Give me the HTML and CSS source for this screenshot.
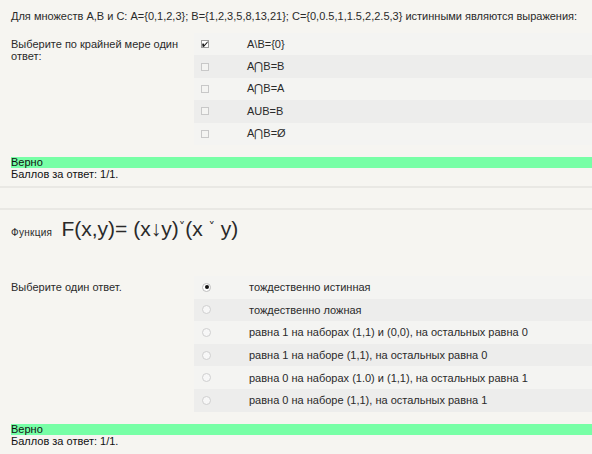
FILE: index.html
```html
<!DOCTYPE html>
<html lang="ru">
<head>
<meta charset="utf-8">
<link rel="stylesheet" href="styles.css">
</head>
<body>
<div class="question q1">
  <div class="qtext">Для множеств А,В и С: А={0,1,2,3}; B={1,2,3,5,8,13,21}; C={0,0.5,1,1.5,2,2.5,3} истинными являются выражения:</div>
  <div class="ablock">
    <div class="prompt">Выберите по крайней мере один ответ:</div>
    <div class="answers">
      <div class="row r0"><span class="cb checked"><svg width="6" height="6" viewBox="0 0 6 6"><path d="M0.5 2.6 L2 4.2 L5.6 0.3 L5.6 1.8 L2 5.8 L0.5 4.2 Z" fill="#1a1a1a"/><rect x="0.5" y="2.6" width="1.6" height="3.2" fill="#1a1a1a"/></svg></span><span class="lbl">A\B={0}</span></div>
      <div class="row r1"><span class="cb"></span><span class="lbl">A⋂B=B</span></div>
      <div class="row r0"><span class="cb"></span><span class="lbl">A⋂B=A</span></div>
      <div class="row r1"><span class="cb"></span><span class="lbl">AUB=B</span></div>
      <div class="row r0"><span class="cb"></span><span class="lbl">A⋂B=Ø</span></div>
    </div>
  </div>
  <div class="feedback">Верно</div>
  <div class="grade">Баллов за ответ: 1/1.</div>
</div>
<div class="sep"></div>
<div class="sep sep2"></div>
<div class="question q2">
  <div class="qtext2"><span class="small">Функция</span> <span class="formula">F(x,y)= (x↓y)<span class="vee">˅</span>(x <span class="vee">˅</span> y)</span></div>
  <div class="ablock ablock2">
    <div class="prompt">Выберите один ответ.</div>
    <div class="answers">
      <div class="row r0"><span class="rd checked"></span><span class="lbl">тождественно истинная</span></div>
      <div class="row r1"><span class="rd"></span><span class="lbl">тождественно ложная</span></div>
      <div class="row r0"><span class="rd"></span><span class="lbl">равна 1 на наборах (1,1) и (0,0), на остальных равна 0</span></div>
      <div class="row r1"><span class="rd"></span><span class="lbl">равна 1 на наборе (1,1), на остальных равна 0</span></div>
      <div class="row r0"><span class="rd"></span><span class="lbl">равна 0 на наборах (1.0) и (1,1), на остальных равна 1</span></div>
      <div class="row r1"><span class="rd"></span><span class="lbl">равна 0 на наборе (1,1), на остальных равна 1</span></div>
    </div>
  </div>
  <div class="feedback">Верно</div>
  <div class="grade">Баллов за ответ: 1/1.</div>
</div>
</body>
</html>
```
FILE: styles.css
```css
html, body {
  margin: 0;
  padding: 0;
  background: #f6f5f1;
}
body {
  font-family: "Liberation Sans", Arial, sans-serif;
  font-size: 11px;
  color: #2a2a2a;
  width: 592px;
  overflow: hidden;
}
.question {
  padding-left: 11px;
}
.qtext {
  padding-top: 10px;
  line-height: 12px;
  height: 12px;
  white-space: nowrap;
}
.ablock {
  display: flex;
  margin-top: 11px;
}
.prompt {
  width: 183px;
  flex: none;
  line-height: 12px;
  padding-top: 5px;
  padding-right: 10px;
  box-sizing: border-box;
}
.answers {
  flex: 1;
}
.row {
  height: 22.4px;
  display: flex;
  align-items: center;
}
.r0 { background: #f4f4f2; }
.r1 { background: #ededec; }
.cb {
  width: 8px;
  height: 8px;
  border: 1px solid #c8c8c8;
  background: #f4f4f2;
  margin-left: 7px;
  box-sizing: border-box;
  flex: none;
  display: flex;
  align-items: center;
  justify-content: center;
}
.cb.checked {
  border-color: #9a9a9a;
  background: #fff;
}
.cb svg { display: block; }
.rd {
  width: 9px;
  height: 9px;
  border: 1px solid #cfcfcf;
  border-radius: 50%;
  margin-left: 8px;
  box-sizing: border-box;
  flex: none;
  background: #f7f7f7;
  position: relative;
}
.rd.checked {
  border-color: #bdbdbd;
  background: #fff;
}
.rd.checked::after {
  content: "";
  position: absolute;
  left: 1.5px;
  top: 1.5px;
  width: 4px;
  height: 4px;
  border-radius: 50%;
  background: #111;
}
.lbl {
  margin-left: 38px;
  white-space: nowrap;
}
.feedback {
  margin-top: 12px;
  background: #77ffa6;
  height: 11px;
  line-height: 11px;
  color: #111;
}
.grade {
  line-height: 12px;
  height: 12px;
  color: #111;
}
.sep {
  height: 2px;
  background: #e9e8e4;
  margin-top: 6px;
}
.sep2 {
  margin-top: 20px;
}
.qtext2 {
  padding-top: 4px;
  height: 26px;
  line-height: 26px;
  white-space: nowrap;
}
.small {
  font-size: 10px;
  letter-spacing: 0.3px;
}
.formula {
  font-family: "Liberation Sans", sans-serif;
  font-size: 21px;
  margin-left: 6px;
}
.vee {
  font-family: "DejaVu Sans", sans-serif;
  font-size: 13px;
  vertical-align: 5px;
}
.ablock2 {
  margin-top: 36px;
}
.ablock2 .row {
  height: 22.6px;
}
```
